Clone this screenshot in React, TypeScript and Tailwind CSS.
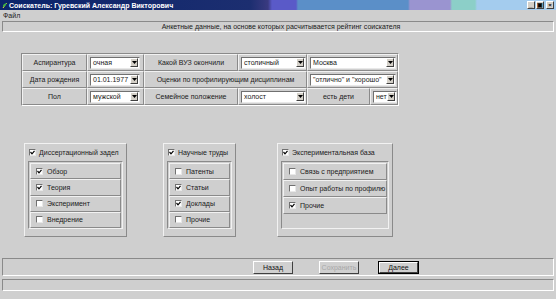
import React from "react";

const F = { fontFamily: '"Liberation Sans", Arial, sans-serif' };

function Arrow() {
  return (
    <div className="w-[8px] h-[9px] bg-[#d4d0c8] border-t border-l border-t-white border-l-white border-b border-r border-b-[#404040] border-r-[#404040] flex items-center justify-center">
      <svg width="5" height="3" viewBox="0 0 5 3">
        <polygon points="0,0 5,0 2.5,3" fill="#000" />
      </svg>
    </div>
  );
}

function Sel({ w, text }: { w: number; text: string }) {
  return (
    <div
      className="h-[12px] bg-white border border-t-[#707070] border-l-[#707070] border-b-[#e8e8e8] border-r-[#e8e8e8] flex items-center justify-between pl-[2px] pr-[1px]"
      style={{ width: w }}
    >
      <span className="text-[7px] text-[#202020] leading-none whitespace-nowrap">{text}</span>
      <Arrow />
    </div>
  );
}

function Cell({ w, children, center }: { w: number; children: React.ReactNode; center?: boolean }) {
  return (
    <div
      className={`h-[17px] flex items-center border-t border-l border-t-[#f2f2f2] border-l-[#f2f2f2] border-b border-r border-b-[#8a8a8a] border-r-[#8a8a8a] ${center ? "justify-center" : "pl-[2px]"}`}
      style={{ width: w }}
    >
      {children}
    </div>
  );
}

function Lbl({ t }: { t: string }) {
  return <span className="text-[7px] text-[#202020] leading-none whitespace-nowrap">{t}</span>;
}

function Check({ on }: { on: boolean }) {
  return (
    <div className="w-[7px] h-[7px] bg-white border border-t-[#707070] border-l-[#707070] border-b-[#e8e8e8] border-r-[#e8e8e8] flex items-center justify-center shrink-0">
      {on && (
        <svg width="5" height="5" viewBox="0 0 5 5">
          <polyline points="0.5,2 2,3.8 4.5,0.8" fill="none" stroke="#000" strokeWidth="1.2" />
        </svg>
      )}
    </div>
  );
}

function Group({ w, title, items }: { w: number; title: string; items: [string, boolean][] }) {
  return (
    <div
      className="h-[94px] border border-t-[#f2f2f2] border-l-[#f2f2f2] border-b-[#8a8a8a] border-r-[#8a8a8a] flex flex-col px-[3px]"
      style={{ width: w }}
    >
      <div className="h-[17px] flex items-center gap-[3px] pl-[1px] shrink-0">
        <Check on={true} />
        <Lbl t={title} />
      </div>
      <div className="h-[68px] border border-t-[#8a8a8a] border-l-[#8a8a8a] border-b-[#f2f2f2] border-r-[#f2f2f2] flex flex-col px-[1px] pt-[1px]">
        {items.map(([t, on], i) => (
          <div
            key={i}
            className="h-[17px] flex items-center gap-[4px] pl-[5px] border-t border-l border-t-[#f2f2f2] border-l-[#f2f2f2] border-b border-r border-b-[#8a8a8a] border-r-[#8a8a8a]"
          >
            <Check on={on} />
            <Lbl t={t} />
          </div>
        ))}
      </div>
    </div>
  );
}

function Btn({ w, t, dis, def }: { w: number; t: string; dis?: boolean; def?: boolean }) {
  return (
    <div
      className={`h-[13px] flex items-center justify-center ${def ? "border border-black" : ""}`}
      style={{ width: w }}
    >
      <div className="w-full h-full flex items-center justify-center border border-t-white border-l-white border-b-[#404040] border-r-[#404040] bg-[#d0d0d0]">
        <span className={`text-[7px] leading-none ${dis ? "text-[#a8a8a8]" : "text-[#101010]"}`}>{t}</span>
      </div>
    </div>
  );
}

export default function App() {
  return (
    <div className="w-[556px] h-[299px] bg-[#cfcfcf] flex flex-col overflow-hidden" style={F}>
      {/* Title bar */}
      <div className="h-[10px] flex items-center bg-[linear-gradient(to_right,#0a246a_0px,#1c2e70_250px,#3a3a80_268px,#5a5ac8_272px,#5a5ac8_296px,#5b8fc8_298px,#5b8fc8_408px,#9a94d0_410px,#9a94d0_450px,#8ccfc8_452px,#8ccfc8_475px,#a4ccee_477px,#a4ccee_556px)]">
        <div className="w-[7px] h-[8px] ml-[1px] flex items-center justify-center">
          <svg width="6" height="7" viewBox="0 0 6 7">
            <path d="M1 6 L3 3 L5 1" stroke="#f0e040" strokeWidth="1" fill="none" />
            <path d="M1 3 Q3 1 5 1 Q4 4 1 5 Z" fill="#3cb043" />
          </svg>
        </div>
        <span className="ml-[1px] text-[7px] font-bold text-white leading-none whitespace-nowrap">
          Соискатель: Гуревский Александр Викторович
        </span>
        <div className="flex-1" />
        <div className="flex gap-[1px] mr-[2px]">
          {["_", "▣", "×"].map((c, i) => (
            <div
              key={i}
              className={`w-[8px] h-[8px] bg-[#d4d0c8] border border-t-white border-l-white border-b-[#404040] border-r-[#404040] flex items-center justify-center text-[6px] leading-none font-bold text-black ${i === 2 ? "ml-[1px]" : ""}`}
            >
              {c}
            </div>
          ))}
        </div>
      </div>
      {/* Menu */}
      <div className="h-[11px] flex items-center pl-[3px]">
        <span className="text-[7px] text-[#202020] leading-none">Файл</span>
      </div>
      {/* Header panel */}
      <div className="mx-[2px] h-[11px] border border-t-[#8a8a8a] border-l-[#8a8a8a] border-b-white border-r-white flex items-center justify-center">
        <span className="text-[7px] text-[#202020] leading-none ml-[6px]">
          Анкетные данные, на основе которых расчитывается рейтинг соискателя
        </span>
      </div>
      {/* Table */}
      <div className="mt-[21px] ml-[21px] w-[378px] border border-t-[#8a8a8a] border-l-[#8a8a8a] border-b-white border-r-white flex flex-col">
        <div className="flex">
          <Cell w={65} center><Lbl t="Аспирантура" /></Cell>
          <Cell w={57}><Sel w={50} text="очная" /></Cell>
          <Cell w={94} center><Lbl t="Какой ВУЗ окончили" /></Cell>
          <Cell w={69}><Sel w={67} text="столичный" /></Cell>
          <Cell w={91}><Sel w={86} text="Москва" /></Cell>
        </div>
        <div className="flex">
          <Cell w={65} center><Lbl t="Дата рождения" /></Cell>
          <Cell w={57}><Sel w={50} text="01.01.1977" /></Cell>
          <Cell w={163} center><Lbl t="Оценки по профилирующим дисциплинам" /></Cell>
          <Cell w={91}><Sel w={86} text={'"отлично" и "хорошо"'} /></Cell>
        </div>
        <div className="flex">
          <Cell w={65} center><Lbl t="Пол" /></Cell>
          <Cell w={57}><Sel w={50} text="мужской" /></Cell>
          <Cell w={94} center><Lbl t="Семейное положение" /></Cell>
          <Cell w={69}><Sel w={67} text="холост" /></Cell>
          <Cell w={63} center><Lbl t="есть дети" /></Cell>
          <Cell w={28}><Sel w={24} text="нет" /></Cell>
        </div>
      </div>
      {/* Groups */}
      <div className="mt-[37px] ml-[24px] flex items-start">
        <Group
          w={103}
          title="Диссертационный задел"
          items={[
            ["Обзор", true],
            ["Теория", true],
            ["Эксперимент", false],
            ["Внедрение", false],
          ]}
        />
        <div className="ml-[36px]">
          <Group
            w={73}
            title="Научные труды"
            items={[
              ["Патенты", false],
              ["Статьи", true],
              ["Доклады", true],
              ["Прочие", false],
            ]}
          />
        </div>
        <div className="ml-[41px]">
          <Group
            w={116}
            title="Экспериментальная база"
            items={[
              ["Связь с предприятием", false],
              ["Опыт работы по профилю", false],
              ["Прочие", true],
            ]}
          />
        </div>
      </div>
      {/* Button bar */}
      <div className="mt-[21px] mx-[2px] h-[18px] border border-t-[#8a8a8a] border-l-[#8a8a8a] border-b-white border-r-white flex items-center">
        <div className="ml-[250px]"><Btn w={40} t="Назад" /></div>
        <div className="ml-[26px]"><Btn w={40} t="Сохранить" dis /></div>
        <div className="ml-[19px]"><Btn w={41} t="Далее" def /></div>
      </div>
      {/* Status bar */}
      <div className="mt-[3px] mx-[2px] h-[12px] border border-t-[#8a8a8a] border-l-[#8a8a8a] border-b-white border-r-white" />
    </div>
  );
}
